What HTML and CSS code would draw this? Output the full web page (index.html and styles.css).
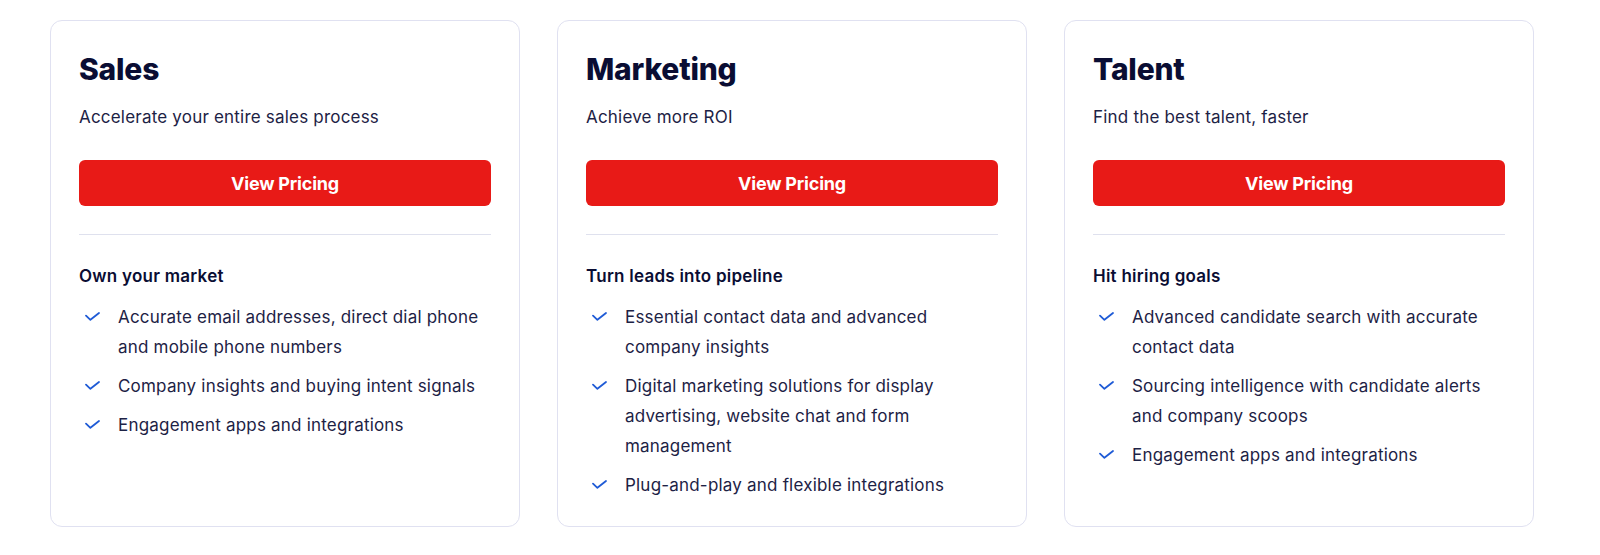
FILE: index.html
```html
<!DOCTYPE html>
<html lang="en">
<head>
<meta charset="utf-8">
<link rel="stylesheet" href="styles.css">
</head>
<body>
<div class="cards">
  <div class="card">
    <h2 class="title">Sales</h2>
    <p class="sub">Accelerate your entire sales process</p>
    <a class="btn">View Pricing</a>
    <hr class="divider">
    <h3 class="lead">Own your market</h3>
    <ul class="list">
      <li><svg class="check" viewBox="0 0 15 9"><path d="M1 3.6 L5.4 7.8 L14 1"/></svg><span>Accurate email addresses, direct dial phone and mobile phone numbers</span></li>
      <li><svg class="check" viewBox="0 0 15 9"><path d="M1 3.6 L5.4 7.8 L14 1"/></svg><span>Company insights and buying intent signals</span></li>
      <li><svg class="check" viewBox="0 0 15 9"><path d="M1 3.6 L5.4 7.8 L14 1"/></svg><span>Engagement apps and integrations</span></li>
    </ul>
  </div>
  <div class="card">
    <h2 class="title">Marketing</h2>
    <p class="sub">Achieve more ROI</p>
    <a class="btn">View Pricing</a>
    <hr class="divider">
    <h3 class="lead">Turn leads into pipeline</h3>
    <ul class="list">
      <li><svg class="check" viewBox="0 0 15 9"><path d="M1 3.6 L5.4 7.8 L14 1"/></svg><span>Essential contact data and advanced company insights</span></li>
      <li><svg class="check" viewBox="0 0 15 9"><path d="M1 3.6 L5.4 7.8 L14 1"/></svg><span>Digital marketing solutions for display advertising, website chat and form management</span></li>
      <li><svg class="check" viewBox="0 0 15 9"><path d="M1 3.6 L5.4 7.8 L14 1"/></svg><span>Plug-and-play and flexible integrations</span></li>
    </ul>
  </div>
  <div class="card">
    <h2 class="title">Talent</h2>
    <p class="sub">Find the best talent, faster</p>
    <a class="btn">View Pricing</a>
    <hr class="divider">
    <h3 class="lead">Hit hiring goals</h3>
    <ul class="list">
      <li><svg class="check" viewBox="0 0 15 9"><path d="M1 3.6 L5.4 7.8 L14 1"/></svg><span>Advanced candidate search with accurate contact data</span></li>
      <li><svg class="check" viewBox="0 0 15 9"><path d="M1 3.6 L5.4 7.8 L14 1"/></svg><span>Sourcing intelligence with candidate alerts and company scoops</span></li>
      <li><svg class="check" viewBox="0 0 15 9"><path d="M1 3.6 L5.4 7.8 L14 1"/></svg><span>Engagement apps and integrations</span></li>
    </ul>
  </div>
</div>
</body>
</html>
```

FILE: styles.css
```css
* { box-sizing: border-box; }
html, body { margin: 0; padding: 0; background: #ffffff; }
body {
  font-family: "Inter", "Noto Sans", sans-serif;
  color: #1d2245;
}
.cards {
  display: grid;
  grid-template-columns: repeat(3, 470px);
  column-gap: 37px;
  padding: 20px 0 0 50px;
}
.card {
  border: 1px solid #e0e1f1;
  border-radius: 12px;
  height: 507px;
  padding: 30px 28px 28px 28px;
  display: flex;
  flex-direction: column;
}
.card > * { flex-shrink: 0; }
.title {
  margin: 0;
  font-size: 30px;
  line-height: 36px;
  font-weight: 800;
  letter-spacing: -0.2px;
  color: #0a0d33;
}
.sub {
  margin: 18px 0 0;
  font-size: 17px;
  line-height: 24px;
  letter-spacing: 0.2px;
  color: #1d2245;
}
.btn {
  display: flex;
  align-items: center;
  justify-content: center;
  margin-top: 31px;
  height: 46px;
  background: #e81a17;
  border-radius: 6px;
  color: #ffffff;
  font-size: 18px;
  font-weight: 700;
  letter-spacing: -0.2px;
}
.divider {
  margin: 28px 0 0;
  border: 0;
  border-top: 1px solid #dfe1ee;
  height: 0;
}
.lead {
  margin: 29px 0 0;
  font-size: 17px;
  line-height: 24px;
  font-weight: 600;
  letter-spacing: 0.25px;
  color: #0a0d33;
}
.list {
  list-style: none;
  margin: 14px 0 0;
  padding: 0;
  display: flex;
  flex-direction: column;
  gap: 9px;
}
.list li {
  display: flex;
  align-items: flex-start;
  font-size: 17px;
  line-height: 30px;
  letter-spacing: 0.2px;
  color: #1d2245;
}
.check {
  flex: none;
  width: 15px;
  height: 9px;
  margin: 10px 18px 0 6px;
  fill: none;
  stroke: #1f5bd6;
  stroke-width: 1.8;
  stroke-linecap: round;
  stroke-linejoin: round;
}
.list span { flex: 1; }
```
